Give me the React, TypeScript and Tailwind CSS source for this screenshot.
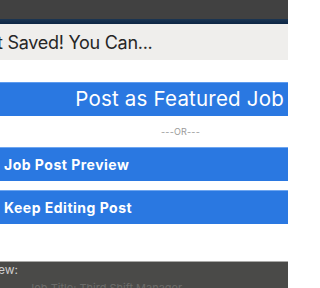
export default function App() {
  return (
    <div className="w-[288px] h-[288px] overflow-hidden bg-white font-['Inter','Noto_Sans',sans-serif]">
      {/* page behind the modal */}
      <div className="h-[19px] bg-[#414141]" />
      <div className="h-[5px] bg-gradient-to-b from-[#1c3652] to-[#0b2544]" />

      {/* modal */}
      <div className="h-[237px] bg-white flex flex-col">
        <div className="h-[36px] bg-[#efeeec] flex items-center pl-[1px] overflow-hidden">
          <span className="whitespace-nowrap text-[18px] text-[#262626] -ml-[4px] tracking-[-0.015em]">
            t Saved! You Can...
          </span>
        </div>

        <div className="mt-[22px] h-[34px] bg-[#2a78e1] flex items-center justify-end pr-[4px] border-t border-[#5e9cef]">
          <span className="text-[20.5px] text-white whitespace-nowrap tracking-[0.01em]">Post as Featured Job</span>
        </div>

        <div className="h-[31px] flex items-center justify-end pr-[88px]">
          <span className="text-[9px] text-[#9a9a9a] tracking-[0.02em]">---OR---</span>
        </div>

        <div className="h-[34px] bg-[#2a78e1] flex items-center pl-[4px] border-t border-[#6ea6f0]">
          <span className="text-[14px] font-bold text-white whitespace-nowrap tracking-[0.035em]">Job Post Preview</span>
        </div>

        <div className="mt-[9px] h-[34px] bg-[#2a78e1] flex items-center pl-[4px] border-t border-[#6ea6f0]">
          <span className="text-[14px] font-bold text-white whitespace-nowrap tracking-[0.035em]">Keep Editing Post</span>
        </div>
      </div>

      {/* page below */}
      <div className="h-[27px] bg-[#4a4a48] border-t border-[#a9a9a7] flex flex-col">
        <span className="text-[12px] text-[#cfcfcf] leading-[13px] -ml-[2px] mt-[1px]">ew:</span>
        <span className="mt-[6px] ml-[28px] text-[11px] text-[#6a6a68] leading-[12px] whitespace-nowrap">Job Title: Third Shift Manager</span>
      </div>
    </div>
  );
}
